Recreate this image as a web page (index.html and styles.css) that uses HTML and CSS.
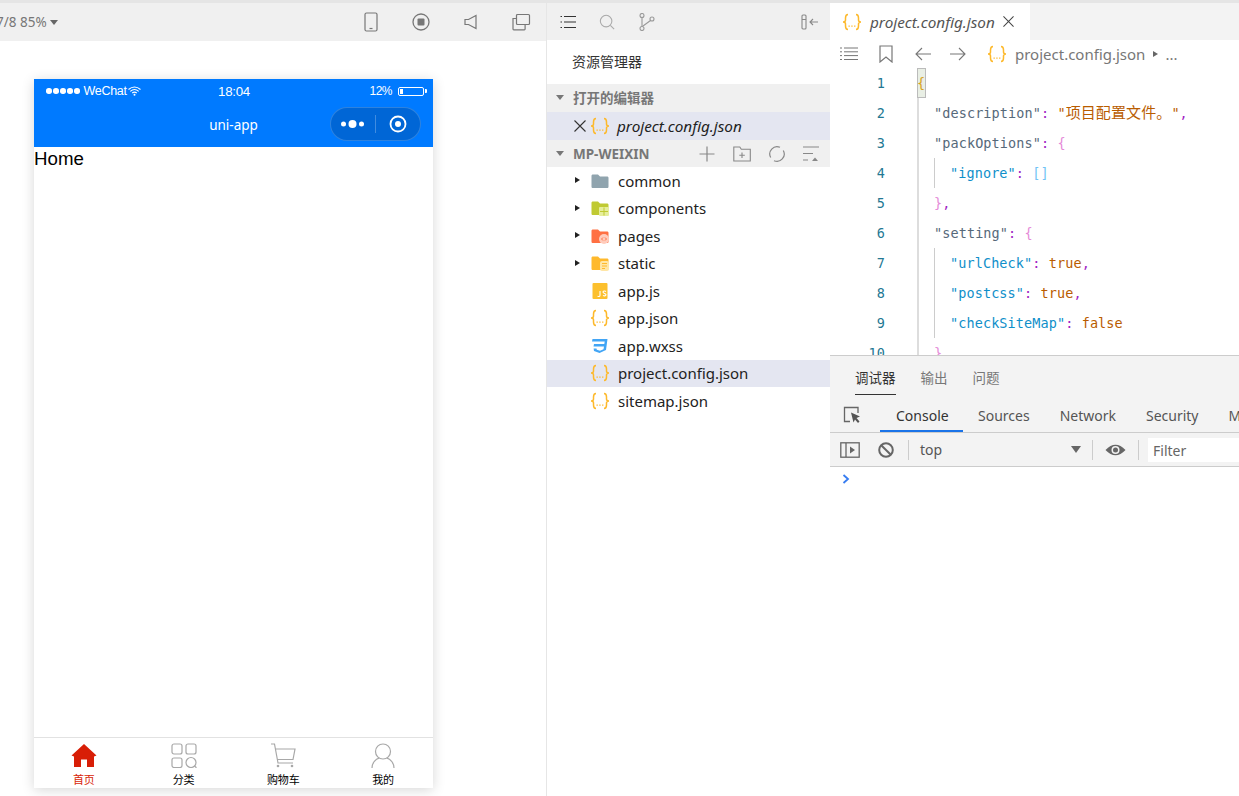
FILE: index.html
```html
<!DOCTYPE html>
<html lang="en">
<head>
    <meta charset="UTF-8">
    <title>WeChat DevTools</title>
    <link rel="stylesheet" href="styles.css">
</head>
<body>
    <svg class="defs" width="0" height="0">
        <symbol id="json" viewBox="0 0 20 18">
            <path d="M6 1.5C3.5 1.5 3.5 3 3.5 5v2C3.5 8 3 9 1 9c2 0 2.500 1 2.500 2v2c0 2 0 3.500 2.500 3.500M14 1.500c2.500 0 2.500 1.500 2.500 3.500v2c0 1 .5 2 2.500 2-2 0-2.500 1-2.500 2v2c0 2 0 3.500-2.500 3.500" fill="none" stroke="#fdb92c" stroke-width="1.500"/>
            <path d="M6.500 12.500h1.300v1.300H6.500zM9.300 12.500h1.300v1.300H9.300zM12.100 12.500h1.300v1.300h-1.300z" fill="#fdb92c"/>
        </symbol>
    </svg>
    <div class="top-strip"></div>
    <div class="workspace">
        <section class="simulator">
            <div class="sim-toolbar">
                <span class="zoom-label">7/8 85%<i class="caret"></i></span>
                <div class="sim-tools">
                    <svg width="18" height="20" viewBox="0 0 18 20"><rect x="3" y="1" width="12" height="18" rx="1.500" fill="none" stroke="#777" stroke-width="1.200"/><path d="M7.500 16.500h3" stroke="#777" stroke-width="1.200"/></svg>
                    <svg width="20" height="20" viewBox="0 0 20 20"><circle cx="10" cy="10" r="8" fill="none" stroke="#777" stroke-width="1.300"/><rect x="6.500" y="6.500" width="7" height="7" rx="1" fill="#777"/></svg>
                    <svg width="18" height="20" viewBox="0 0 18 20"><path d="M3 7.500h3.500L14 3.500v13l-7.500-4H3z" fill="none" stroke="#777" stroke-width="1.200"/></svg>
                    <svg width="20" height="20" viewBox="0 0 20 20"><rect x="5.500" y="2.500" width="13" height="10" rx="1" fill="none" stroke="#777" stroke-width="1.200"/><path d="M5.500 6.500H2v10.500c0 .5.300.8.800.8h10.500c.5 0 .8-.3.800-.8v-4.500" fill="none" stroke="#777" stroke-width="1.200"/></svg>
                </div>
            </div>
            <div class="phone">
                <div class="phone-header">
                    <div class="status-bar">
                        <div class="status-left">
                            <span class="signal"><i></i><i></i><i></i><i></i><i></i></span>
                            <span>WeChat</span>
                            <svg class="wifi" width="13" height="10" viewBox="0 0 13 10"><path d="M.5 3.500Q6.500-1.500 12.500 3.500M2.300 5.300Q6.500 1.800 10.700 5.300M4.200 7Q6.500 5.200 8.800 7" fill="none" stroke="#fff" stroke-width="1.100"/><circle cx="6.500" cy="8.800" r="1" fill="#fff"/></svg>
                        </div>
                        <span class="status-time">18:04</span>
                        <div class="status-right">
                            <span>12%</span>
                            <span class="battery"><i></i></span>
                        </div>
                    </div>
                    <div class="nav-bar">
                        <span class="nav-title">uni-app</span>
                        <div class="capsule">
                            <svg class="capsule-dots" width="23" height="10" viewBox="0 0 23 10"><circle cx="2.500" cy="5" r="2.500" fill="#fff"/><circle cx="11.500" cy="5" r="4" fill="#fff"/><circle cx="20.500" cy="5" r="2.500" fill="#fff"/></svg>
                            <i class="capsule-line"></i>
                            <svg width="18" height="18" viewBox="0 0 18 18"><circle cx="9" cy="9" r="7.500" fill="none" stroke="#fff" stroke-width="1.800"/><circle cx="9" cy="9" r="3" fill="#fff"/></svg>
                        </div>
                    </div>
                </div>
                <div class="phone-body">Home</div>
                <div class="tab-bar">
                    <div class="tab tab-active">
                        <svg width="26" height="25" viewBox="0 0 26 25"><path d="M13 1 25.500 12.500 23 13.500V24H16V16.500H10V24H3V13.500L.5 12.500z" fill="#d81e06"/></svg>
                        <span>首页</span>
                    </div>
                    <div class="tab">
                        <svg width="26" height="25" viewBox="0 0 26 25"><g fill="none" stroke="#a8a8a8" stroke-width="1.200"><rect x="1" y="1" width="10" height="10" rx="2"/><rect x="15" y="1" width="10" height="10" rx="2"/><rect x="1" y="15" width="10" height="9.500" rx="2"/><circle cx="20" cy="19.500" r="5"/><path d="M23.500 23l2 1.800"/></g></svg>
                        <span>分类</span>
                    </div>
                    <div class="tab">
                        <svg width="26" height="25" viewBox="0 0 26 25"><g fill="none" stroke="#a8a8a8" stroke-width="1.200"><path d="M1 1h3.500L8 20h15M5.500 6H25L23 16.500H7.500"/></g><circle cx="8" cy="23" r="1.300" fill="#a8a8a8"/><circle cx="22" cy="23" r="1.300" fill="#a8a8a8"/></svg>
                        <span>购物车</span>
                    </div>
                    <div class="tab">
                        <svg width="26" height="25" viewBox="0 0 26 25"><g fill="none" stroke="#a8a8a8" stroke-width="1.200"><circle cx="13" cy="8.500" r="7.500"/><path d="M2 25c0-5.500 4-9 7-9.800M24 25c0-5.500-4-9-7-9.800"/></g></svg>
                        <span>我的</span>
                    </div>
                </div>
            </div>
        </section>

        <section class="sidebar">
            <div class="side-toolbar">
                <svg width="16" height="14" viewBox="0 0 16 14"><path d="M4 1.500h12M4 7h12M4 12.500h12" stroke="#333" stroke-width="1.100"/><path d="M.5 1.500h1.500M.5 7h1.500M.5 12.500h1.500" stroke="#333" stroke-width="1.100"/></svg>
                <svg class="side-search" width="16" height="16" viewBox="0 0 18 18"><circle cx="8" cy="8" r="6.500" fill="none" stroke="#aaa" stroke-width="1.200"/><path d="M12.800 12.800 17 17" stroke="#aaa" stroke-width="1.200"/></svg>
                <svg class="side-branch" width="16" height="18" viewBox="0 0 16 18"><g fill="none" stroke="#999" stroke-width="1.100"><circle cx="3" cy="2.500" r="2"/><circle cx="3" cy="15.500" r="2"/><circle cx="13" cy="6" r="2"/><path d="M3 4.500v9M4 13 11.500 7.500"/></g></svg>
                <svg class="side-collapse" width="18" height="16" viewBox="0 0 18 16"><rect x="1" y="1" width="4" height="14" rx="1" fill="none" stroke="#888" stroke-width="1.100"/><path d="M1 5.500h4M17 8H9M12 5 9 8l3 3" fill="none" stroke="#888" stroke-width="1.100"/></svg>
            </div>
            <div class="explorer-title">资源管理器</div>
            <div class="side-heading"><i class="arrow-down"></i>打开的编辑器</div>
            <div class="open-file">
                <svg class="close-x" width="12" height="12" viewBox="0 0 12 12"><path d="M.5.500l11 11M11.500.500l-11 11" stroke="#333" stroke-width="1.100"/></svg>
                <svg class="file-icon" width="20" height="18"><use href="#json"/></svg>
                <em>project.config.json</em>
            </div>
            <div class="side-heading side-heading-root">
                <i class="arrow-down"></i>MP-WEIXIN
                <div class="heading-tools">
                    <svg width="18" height="18" viewBox="0 0 18 18"><path d="M9 1.500v15M1.500 9h15" stroke="#888" stroke-width="1.200"/></svg>
                    <svg width="18" height="16" viewBox="0 0 18 16"><path d="M.8 1h6l1.500 2.200h9v11.800H.8z" fill="none" stroke="#888" stroke-width="1.100"/><path d="M9 6.500v5.500M6.300 9.300h5.500" stroke="#888" stroke-width="1.100"/></svg>
                    <svg width="18" height="18" viewBox="0 0 18 18"><path d="M2.700 12.500A7.300 7.300 0 0 1 12 2.300M15.300 5.500A7.300 7.300 0 0 1 6 15.700" fill="none" stroke="#888" stroke-width="1.200"/></svg>
                    <svg width="16" height="16" viewBox="0 0 16 16"><path d="M0 1h16M0 7.500h10M0 14h5" stroke="#888" stroke-width="1.200"/><path d="M9 15l3-3.500 3 3.500z" fill="#888"/></svg>
                </div>
            </div>
            <ul class="tree">
                <li><i class="arrow-right"></i>
                    <svg class="file-icon" width="18" height="16" viewBox="0 0 18 16"><path d="M.5 3c0-1 .5-1.500 1.500-1.500h5l2 2h7c1 0 1.500.5 1.500 1.500v8.500c0 1-.5 1.500-1.500 1.500H2c-1 0-1.500-.5-1.500-1.500z" fill="#90a4ae"/></svg>
                    <span>common</span></li>
                <li><i class="arrow-right"></i>
                    <svg class="file-icon" width="18" height="16" viewBox="0 0 18 16"><path d="M.5 3c0-1 .5-1.500 1.500-1.500h5l2 2h7c1 0 1.500.5 1.500 1.500v8.500c0 1-.5 1.500-1.500 1.500H2c-1 0-1.500-.5-1.500-1.500z" fill="#c0ca33"/><rect x="8" y="7" width="10" height="9" rx="1" fill="#e6ee9c"/><path d="M13 7.500v8M9 11.500h8" stroke="#c0ca33"/></svg>
                    <span>components</span></li>
                <li><i class="arrow-right"></i>
                    <svg class="file-icon" width="18" height="16" viewBox="0 0 18 16"><path d="M.5 3c0-1 .5-1.500 1.500-1.500h5l2 2h7c1 0 1.500.5 1.500 1.500v8.500c0 1-.5 1.500-1.500 1.500H2c-1 0-1.500-.5-1.500-1.500z" fill="#ff7043"/><circle cx="13" cy="11" r="5" fill="#ffccbc"/><path d="M12 9.500 10.500 11l1.500 1.500M14 9.500l1.500 1.500-1.500 1.500" fill="none" stroke="#ff7043"/></svg>
                    <span>pages</span></li>
                <li><i class="arrow-right"></i>
                    <svg class="file-icon" width="18" height="16" viewBox="0 0 18 16"><path d="M.5 3c0-1 .5-1.500 1.500-1.500h5l2 2h7c1 0 1.500.5 1.500 1.500v8.500c0 1-.5 1.500-1.500 1.500H2c-1 0-1.500-.5-1.500-1.500z" fill="#ffb92c"/><rect x="9" y="6" width="9" height="10" rx="2" fill="#ffe6a6"/><path d="M11 8.500h5M11 11h5M11 13.500h3" stroke="#ffb92c"/></svg>
                    <span>static</span></li>
                <li>
                    <svg class="file-icon" width="18" height="16" viewBox="0 0 18 16"><rect x="1.500" y="0" width="15" height="16" rx="1" fill="#fcc02e"/><path d="M9 8v4.500c0 1-1.500 1.300-2.500.6M15 8.500c-1-.8-3-.6-3 .6 0 1.700 3 1 3 2.700 0 1.200-2 1.400-3 .6" fill="none" stroke="#fff" stroke-width="1.100"/></svg>
                    <span>app.js</span></li>
                <li>
                    <svg class="file-icon json-icon" width="20" height="18"><use href="#json"/></svg>
                    <span>app.json</span></li>
                <li>
                    <svg class="file-icon" width="18" height="16" viewBox="0 0 18 16"><path d="M1.500 1H16.500L15 12 8.500 15 3 13 2.600 10.500H5.500L5.800 11.800 9 12.800 12.500 11.300 13 8.500H2.500L3 6H13.300L13.700 3.600H1z" fill="#42a5f5"/></svg>
                    <span>app.wxss</span></li>
                <li class="tree-selected">
                    <svg class="file-icon json-icon" width="20" height="18"><use href="#json"/></svg>
                    <span>project.config.json</span></li>
                <li>
                    <svg class="file-icon json-icon" width="20" height="18"><use href="#json"/></svg>
                    <span>sitemap.json</span></li>
            </ul>
        </section>

        <section class="main-pane">
            <div class="editor-tabs">
                <div class="editor-tab">
                    <svg width="20" height="18"><use href="#json"/></svg>
                    <em>project.config.json</em>
                    <svg width="11" height="11" viewBox="0 0 12 12"><path d="M.5.500l11 11M11.500.500l-11 11" stroke="#444" stroke-width="1.100"/></svg>
                </div>
            </div>
            <div class="breadcrumb">
                <svg width="18" height="14" viewBox="0 0 18 14"><path d="M4 1h14M4 4.800h14M4 8.600h14M4 12.500h14M0 1h2M0 4.800h2M0 8.600h2M0 12.500h2" stroke="#777" stroke-width="1"/></svg>
                <svg class="crumb-mark" width="14" height="18" viewBox="0 0 14 18"><path d="M1 1h12v16l-6-5-6 5z" fill="none" stroke="#777" stroke-width="1.200"/></svg>
                <svg class="crumb-back" width="16" height="14" viewBox="0 0 16 14"><path d="M16 7H1M7 1 1 7l6 6" fill="none" stroke="#777" stroke-width="1.100"/></svg>
                <svg class="crumb-next" width="16" height="14" viewBox="0 0 16 14"><path d="M0 7h15M9 1l6 6-6 6" fill="none" stroke="#777" stroke-width="1.100"/></svg>
                <svg class="crumb-json" width="20" height="18"><use href="#json"/></svg>
                <span>project.config.json</span>
                <i class="crumb-arrow"></i>
                <span class="crumb-more">...</span>
            </div>
            <div class="code-view">
                <div class="gutter">
                    <div>1</div><div>2</div><div>3</div><div>4</div><div>5</div>
                    <div>6</div><div>7</div><div>8</div><div>9</div><div>10</div>
                </div>
                <div class="code">
                    <div class="line line-first"><span class="match">{</span></div>
                    <div class="line"><span class="k1">"description"</span><span class="p">:</span> <span class="s">"<span class="cjk">项目配置文件。</span>"</span><span class="p">,</span></div>
                    <div class="line"><span class="k1">"packOptions"</span><span class="p">:</span> <span class="b">{</span></div>
                    <div class="nest">
                        <div class="line"><span class="k2">"ignore"</span><span class="p">:</span> <span class="a">[]</span></div>
                    </div>
                    <div class="line"><span class="b">}</span><span class="p">,</span></div>
                    <div class="line"><span class="k1">"setting"</span><span class="p">:</span> <span class="b">{</span></div>
                    <div class="nest">
                        <div class="line"><span class="k2">"urlCheck"</span><span class="p">:</span> <span class="s">true</span><span class="p">,</span></div>
                        <div class="line"><span class="k2">"postcss"</span><span class="p">:</span> <span class="s">true</span><span class="p">,</span></div>
                        <div class="line"><span class="k2">"checkSiteMap"</span><span class="p">:</span> <span class="s">false</span></div>
                    </div>
                    <div class="line"><span class="b">}</span></div>
                </div>
            </div>
            <div class="panel">
                <div class="panel-tabs">
                    <span class="panel-tab panel-tab-active">调试器</span>
                    <span class="panel-tab">输出</span>
                    <span class="panel-tab">问题</span>
                </div>
                <div class="dev-tabs">
                    <svg class="inspect" width="18" height="18" viewBox="0 0 18 18"><path d="M7 15.500H1.500V1.500H15V7" fill="none" stroke="#666" stroke-width="1.300"/><path d="M8 6.500 17 10.500 13.500 12 16.500 15.500 15 17 12 13.500 10.500 16.500z" fill="#555"/></svg>
                    <i class="dev-sep"></i>
                    <span class="dev-tab dev-tab-active">Console</span>
                    <span class="dev-tab">Sources</span>
                    <span class="dev-tab">Network</span>
                    <span class="dev-tab">Security</span>
                    <span class="dev-tab">Memory</span>
                </div>
                <div class="console-bar">
                    <svg width="20" height="18" viewBox="0 0 20 18"><rect x=".8" y="1.800" width="18.400" height="14.400" fill="none" stroke="#666" stroke-width="1.300"/><path d="M6 2v14" stroke="#666" stroke-width="1.300"/><path d="M10 5.500 15 9l-5 3.500z" fill="#666"/></svg>
                    <svg class="no-entry" width="16" height="16" viewBox="0 0 16 16"><circle cx="8" cy="8" r="6.800" fill="none" stroke="#666" stroke-width="2"/><path d="M3.200 3.200 12.800 12.800" stroke="#666" stroke-width="2"/></svg>
                    <i class="dev-sep"></i>
                    <span class="context">top</span>
                    <i class="context-caret"></i>
                    <i class="dev-sep"></i>
                    <svg class="eye" width="21" height="14" viewBox="0 0 20 14"><path d="M0 7Q10-3.500 20 7 10 17.500 0 7z" fill="#666"/><circle cx="10" cy="7" r="4" fill="#f3f3f3"/><circle cx="10" cy="7" r="2.500" fill="#666"/></svg>
                    <i class="dev-sep"></i>
                    <span class="filter">Filter</span>
                </div>
                <div class="console-body">
                    <svg width="8" height="10" viewBox="0 0 8 10"><path d="M1.500 1 6 5 1.500 9" fill="none" stroke="#367cf1" stroke-width="1.800"/></svg>
                </div>
            </div>
        </section>
    </div>
</body>
</html>
```

FILE: styles.css
```css
* { box-sizing: border-box; }
html, body { margin: 0; padding: 0; }
body { width: 1239px; height: 796px; overflow: hidden; background: #fff; color: #333; font-family: "Noto Sans", "Noto Sans CJK SC", sans-serif; font-size: 14px; }
i { display: block; font-style: normal; }
svg { display: block; flex: none; }
.defs { position: absolute; }
.top-strip { height: 3px; background: #e5e5e5; }
.workspace { display: grid; grid-template-columns: 547px 283px 409px; height: 793px; }

/* simulator */
.simulator { border-right: 1px solid #e6e6e6; }
.sim-toolbar { height: 38px; background: #f0f0f0; display: flex; align-items: center; justify-content: space-between; padding-right: 15px; overflow: hidden; }
.zoom-label { margin-left: -4px; font-size: 13.500px; color: #777; display: flex; align-items: center; gap: 3px; white-space: pre; }
.caret { border: 4px solid transparent; border-top: 5px solid #666; border-bottom: 0; }
.sim-tools { display: flex; align-items: center; gap: 31px; }
.phone { margin: 38px 0 0 34px; width: 399px; height: 709px; display: flex; flex-direction: column; box-shadow: 0 2px 12px rgba(0, 0, 0, .16); }
.phone-header { height: 68px; background: #007aff; color: #fff; font-family: "Liberation Sans", sans-serif; }
.status-bar { height: 24px; padding: 0 9px 0 12px; display: grid; grid-template-columns: 1fr auto 1fr; align-items: center; font-size: 12.500px; letter-spacing: -.3px; }
.status-left { display: flex; align-items: center; gap: 4px; }
.signal { display: flex; gap: 1.500px; }
.signal i { width: 5.500px; height: 5.500px; border-radius: 50%; background: #fff; }
.wifi { margin-left: -3px; }
.status-time { font-size: 13.300px; margin-left: -2px; }
.status-right { display: flex; align-items: center; justify-content: flex-end; gap: 6px; }
.status-right span:first-child { font-size: 12px; letter-spacing: -.5px; }
.battery { width: 26px; height: 9px; border: 1px solid #fff; border-radius: 2px; position: relative; padding: 1px; }
.battery i { width: 3px; height: 100%; background: #fff; }
.battery::after { content: ""; position: absolute; right: -4px; top: 1.500px; width: 2px; height: 4px; background: #fff; border-radius: 0 1px 1px 0; }
.nav-bar { height: 44px; display: flex; align-items: center; justify-content: center; position: relative; }
.nav-title { font-size: 13.500px; font-family: "Noto Sans", sans-serif; }
.capsule { position: absolute; right: 12px; top: 4px; width: 91px; height: 34px; border-radius: 17px; background: rgba(0, 0, 0, .16); border: 1px solid rgba(255, 255, 255, .18); display: flex; align-items: center; padding-left: 10px; }
.capsule-line { width: 1px; height: 18px; background: rgba(255, 255, 255, .25); margin: 0 13px 0 11px; }
.phone-body { flex: 1; color: #000; font-family: "Liberation Sans", sans-serif; font-size: 18.700px; line-height: 24px; }
.tab-bar { height: 51px; border-top: 1px solid #e2e2e2; display: grid; grid-template-columns: repeat(4, 1fr); }
.tab { display: flex; flex-direction: column; align-items: center; padding-top: 5px; gap: 4px; font-size: 11px; line-height: 14px; color: #000; font-family: "Noto Sans CJK SC", sans-serif; }
.tab-active { color: #d81e06; }

/* explorer */
.side-toolbar { height: 37px; background: #f0f0f0; display: flex; align-items: center; padding: 0 11px 0 13px; }
.side-search { margin-left: 23px; }
.side-branch { margin-left: 24px; }
.side-collapse { margin-left: auto; }
.explorer-title { height: 44px; display: flex; align-items: center; padding: 0 0 3px 25px; font-size: 14px; }
.side-heading { height: 28px; background: #f0f0f0; display: flex; align-items: center; padding: 0 0 2px 9px; font-size: 13.500px; font-weight: 700; color: #777; }
.side-heading-root { height: 27px; padding-bottom: 0; }
.arrow-down { border: 4px solid transparent; border-top: 5px solid #777; border-bottom: 0; margin-right: 9px; }
.heading-tools { margin-left: auto; padding-right: 11px; display: flex; align-items: center; gap: 17px; }
.open-file { height: 28px; background: #e4e6f1; display: flex; align-items: center; padding-left: 27px; font-size: 15.300px; color: #222; }
.open-file em { margin-left: 7px; }
.close-x { margin-right: 4px; }
.tree { list-style: none; margin: 0; padding: 0; font-size: 15px; color: #222; }
.tree li { height: 27.500px; display: flex; align-items: center; padding-left: 44px; position: relative; }
.tree li .file-icon { margin-right: 9px; }
.tree li .json-icon { margin: 0 8px 0 -1px; }
.arrow-right { position: absolute; left: 28px; top: 10px; border: 3.500px solid transparent; border-left: 5px solid #222; border-right: 0; }
.tree-selected { background: #e4e6f1; }

/* editor */
.main-pane { display: flex; flex-direction: column; height: 793px; }
.editor-tabs { height: 37px; background: #f3f3f3; flex: none; }
.editor-tab { width: 200px; height: 37px; background: #fff; display: flex; align-items: center; padding-left: 12px; gap: 8px; font-size: 15.300px; color: #555; }
.breadcrumb { height: 28px; flex: none; display: flex; align-items: center; padding-left: 10px; font-size: 15px; color: #777; }
.crumb-mark { margin-left: 21px; }
.crumb-back { margin-left: 22px; }
.crumb-next { margin-left: 19px; }
.crumb-json { margin: 0 8px 0 21px; }
.crumb-arrow { margin-left: 8px; border: 3.500px solid transparent; border-left: 5px solid #666; border-right: 0; }
.crumb-more { margin-left: 7px; }
.code-view { height: 287px; flex: none; display: flex; overflow: hidden; font-family: "DejaVu Sans Mono", "Noto Sans CJK SC", monospace; font-size: 13.500px; letter-spacing: .1px; }
.gutter { width: 87px; flex: none; padding-right: 32px; text-align: right; color: #237893; }
.gutter div { height: 30px; line-height: 30px; }
.code { border-left: 2px solid #ddd; height: 300px; flex: 1; padding-left: 15px; }
.line { height: 30px; line-height: 30px; white-space: pre; }
.line-first { margin-left: -17px; }
.nest { border-left: 1px solid #ccc; padding-left: 15px; margin-left: 0; }
.match { display: inline-block; width: 9px; height: 30px; background: #e9efe5; border: 1px solid #bbb; letter-spacing: 0; color: #d7a21c; text-indent: -1px; line-height: 29px; }
.cjk { font-family: "Noto Sans CJK SC", sans-serif; font-size: 15px; line-height: 1; }
.k1 { color: #56697a; }
.k2 { color: #0f8fca; }
.p { color: #a11fc4; }
.s { color: #b95c00; }
.b { color: #e58ad8; }
.a { color: #72c4f5; }

/* debug panel */
.panel { flex: 1; border-top: 1px solid #ccc; background: #f3f3f3; display: flex; flex-direction: column; }
.panel-tabs { height: 40px; padding-left: 25px; display: flex; gap: 25px; font-size: 13.500px; color: #777; }
.panel-tab { height: 39px; line-height: 45px; }
.panel-tab-active { color: #333; border-bottom: 1px solid #333; }
.dev-tabs { height: 37px; display: flex; align-items: center; padding-left: 13px; border-bottom: 1px solid #ccc; font-size: 14px; color: #555; overflow: hidden; }
.dev-sep { width: 1px; height: 20px; background: #ccc; }
.dev-tabs .dev-sep { margin-left: 12px; margin-right: 7px; }
.inspect { margin-top: 2px; }
.dev-tab { padding: 0 14px 0 16px; height: 37px; line-height: 40px; flex: none; }
.dev-tab-active { color: #333; border-bottom: 3px solid #1a73e8; width: 83px; margin-right: -1px; }
.console-bar { height: 34px; display: flex; align-items: center; padding-left: 10px; border-bottom: 1px solid #ccc; font-size: 14px; color: #555; }
.no-entry { margin: 0 14px 0 18px; }
.context { margin-left: 11px; width: 151px; }
.context-caret { border: 5px solid transparent; border-top: 7px solid #666; border-bottom: 0; margin-right: 11px; }
.eye { margin: 0 12px; }
.filter { margin-left: 9px; flex: 1; height: 24px; line-height: 25px; padding-left: 5px; background: #fff; color: #666; }
.console-body { flex: 1; background: #fff; padding: 7px 0 0 12px; }
```
